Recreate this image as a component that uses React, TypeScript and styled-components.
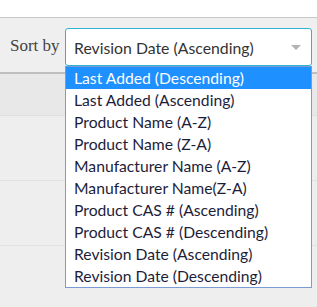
import React, { useState } from 'react';
import styled, { createGlobalStyle } from 'styled-components';

const GlobalStyle = createGlobalStyle`
  html, body {
    margin: 0;
    padding: 0;
    background: #eeeeee;
  }
`;

const Page = styled.div`
  width: 317px;
  height: 307px;
  overflow: hidden;
  background: #eeeeee;
  font-family: 'Lato', sans-serif;
`;

const TopStrip = styled.div`
  height: 17px;
  background: #ffffff;
  border-bottom: 1px solid #c9c9cb;
`;

const Toolbar = styled.div`
  position: relative;
  height: 56px;
  display: flex;
  align-items: flex-start;
  padding-top: 10px;
  box-sizing: border-box;
  background: #efefef;
  border-bottom: 2px solid #bfbfc2;
`;

const SortLabel = styled.label`
  width: 55px;
  flex: none;
  font-family: 'Liberation Serif', serif;
  font-size: 17px;
  color: #444;
  margin: 8px 0 0 10px;
`;

const SelectBox = styled.div`
  position: relative;
  width: 247px;
  height: 38px;
  box-sizing: border-box;
  border: 1px solid #2fb2d4;
  border-radius: 3px;
  background: #fff;
  display: flex;
  align-items: center;
  padding-left: 8px;
  font-size: 15.8px;
  color: #333;
`;

const Caret = styled.span`
  position: absolute;
  right: 10px;
  top: 16px;
  width: 0;
  height: 0;
  border-left: 5px solid transparent;
  border-right: 5px solid transparent;
  border-top: 5px solid #b3b3b3;
`;

const Menu = styled.ul`
  position: absolute;
  left: -1px;
  top: 37px;
  width: 247px;
  margin: 0;
  padding: 0;
  list-style: none;
  box-sizing: border-box;
  background: #fff;
  border: 1px solid #7a9bd4;
  z-index: 2;
`;

const Option = styled.li<{ $active: boolean }>`
  height: 22px;
  line-height: 22px;
  padding-left: 8px;
  font-size: 15.7px;
  color: ${(p) => (p.$active ? '#fff' : '#1d1d3a')};
  background: ${(p) => (p.$active ? '#1e90ff' : 'transparent')};
  white-space: nowrap;
`;

const HeaderRow = styled.div`
  height: 41px;
  background: #e8e8e8;
  border-bottom: 1px solid #e0e0e0;
`;

const Row = styled.div`
  height: 64px;
  border-bottom: 1px solid #e2e2e2;
`;

const options = [
  'Last Added (Descending)',
  'Last Added (Ascending)',
  'Product Name (A-Z)',
  'Product Name (Z-A)',
  'Manufacturer Name (A-Z)',
  'Manufacturer Name(Z-A)',
  'Product CAS # (Ascending)',
  'Product CAS # (Descending)',
  'Revision Date (Ascending)',
  'Revision Date (Descending)',
];

export default function App() {
  const [hover] = useState(0);

  return (
    <Page>
      <GlobalStyle />
      <TopStrip />
      <Toolbar>
        <SortLabel>Sort by</SortLabel>
        <SelectBox>
          Revision Date (Ascending)
          <Caret />
          <Menu>
            {options.map((o, i) => (
              <Option key={o} $active={i === hover}>
                {o}
              </Option>
            ))}
          </Menu>
        </SelectBox>
      </Toolbar>
      <HeaderRow />
      <Row />
      <Row />
    </Page>
  );
}
